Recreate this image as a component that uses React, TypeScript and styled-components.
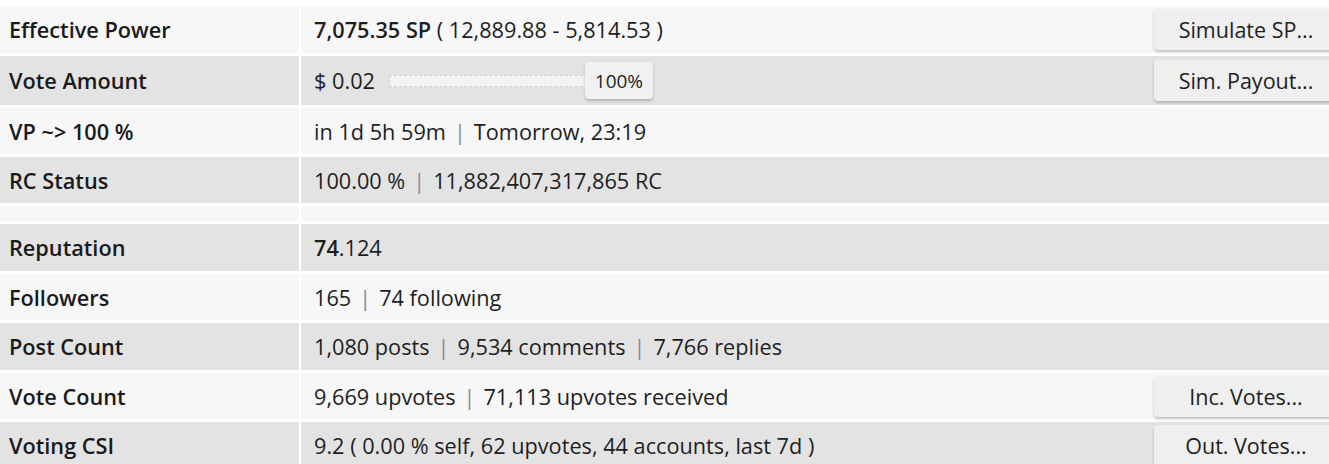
import React from "react";
import styled, { createGlobalStyle } from "styled-components";

const Global = createGlobalStyle`
  html, body { margin: 0; padding: 0; background: #ffffff; overflow: hidden; }
  body { font-family: "Open Sans", "Noto Sans", sans-serif; color: #222; }
`;

const Table = styled.div`
  width: 1338px;
  padding-top: 6px;
  display: flex;
  flex-direction: column;
  gap: 3px;
  background: #fff;
`;

const Row = styled.div<{ $h: number }>`
  display: grid;
  grid-template-columns: 299px 1fr;
  column-gap: 2px;
  height: ${(p) => p.$h}px;
`;

const Label = styled.div<{ $dark?: boolean }>`
  background: ${(p) => (p.$dark ? "#e3e3e3" : "#f7f7f7")};
  display: flex;
  align-items: center;
  padding-left: 9px;
  font-size: 21.7px;
  font-weight: 600;
  color: #1a1a1a;
`;

const Value = styled.div<{ $dark?: boolean }>`
  background: ${(p) => (p.$dark ? "#e3e3e3" : "#f7f7f7")};
  display: flex;
  align-items: center;
  padding-left: 13px;
  font-size: 21.7px;
  font-weight: 400;
  color: #1e1e1e;
  white-space: pre;
`;

const Strong = styled.b`
  font-weight: 600;
`;

const Sep = styled.span`
  color: #8a8a90;
  margin: 0 8px;
`;

const ActionButton = styled.button`
  margin-left: auto;
  width: 184px;
  height: 41px;
  border: none;
  border-radius: 4px;
  background: #efefef;
  box-shadow: 0 2px 3px rgba(0, 0, 0, 0.22);
  font-family: "Open Sans", "Noto Sans", sans-serif;
  font-size: 21.5px;
  color: #1e1e1e;
  padding: 0;
  cursor: pointer;
`;

const Slider = styled.div`
  position: relative;
  margin-left: 14px;
  width: 264px;
  height: 37px;
  display: flex;
  align-items: center;
`;

const Track = styled.div`
  width: 100%;
  height: 10px;
  border: 1px dashed #cfcfcf;
  background: #f3f3f3;
`;

const Handle = styled.div`
  position: absolute;
  right: 0;
  top: 0;
  width: 68px;
  height: 37px;
  border-radius: 4px;
  background: #f1f1f1;
  box-shadow: 0 2px 3px rgba(0, 0, 0, 0.22);
  display: flex;
  align-items: center;
  justify-content: center;
  font-size: 19px;
  color: #1e1e1e;
`;

type Item = {
  label: React.ReactNode;
  value?: React.ReactNode;
  h: number;
  dark?: boolean;
  button?: string;
};

const rows: Item[] = [
  {
    label: "Effective Power",
    value: (
      <>
        <Strong>7,075.35 SP</Strong>
        {" ( 12,889.88 - 5,814.53 )"}
      </>
    ),
    h: 47,
    button: "Simulate SP...",
  },
  {
    label: "Vote Amount",
    value: (
      <>
        {"$ 0.02"}
        <Slider>
          <Track />
          <Handle>100%</Handle>
        </Slider>
      </>
    ),
    h: 49,
    dark: true,
    button: "Sim. Payout...",
  },
  {
    label: "VP ~> 100 %",
    value: (
      <>
        {"in 1d 5h 59m"}
        <Sep>|</Sep>
        {"Tomorrow, 23:19"}
      </>
    ),
    h: 46,
  },
  {
    label: "RC Status",
    value: (
      <>
        {"100.00 %"}
        <Sep>|</Sep>
        {"11,882,407,317,865 RC"}
      </>
    ),
    h: 46,
    dark: true,
  },
  { label: "", value: "", h: 15 },
  {
    label: "Reputation",
    value: (
      <>
        <Strong>74</Strong>
        {".124"}
      </>
    ),
    h: 47,
    dark: true,
  },
  {
    label: "Followers",
    value: (
      <>
        {"165"}
        <Sep>|</Sep>
        {"74 following"}
      </>
    ),
    h: 46,
  },
  {
    label: "Post Count",
    value: (
      <>
        {"1,080 posts"}
        <Sep>|</Sep>
        {"9,534 comments"}
        <Sep>|</Sep>
        {"7,766 replies"}
      </>
    ),
    h: 47,
    dark: true,
  },
  {
    label: "Vote Count",
    value: (
      <>
        {"9,669 upvotes"}
        <Sep>|</Sep>
        {"71,113 upvotes received"}
      </>
    ),
    h: 46,
    button: "Inc. Votes...",
  },
  {
    label: "Voting CSI",
    value: "9.2 ( 0.00 % self, 62 upvotes, 44 accounts, last 7d )",
    h: 46,
    dark: true,
    button: "Out. Votes...",
  },
];

export default function App() {
  return (
    <>
      <Global />
      <Table>
        {rows.map((r, i) => (
          <Row key={i} $h={r.h}>
            <Label $dark={r.dark}>{r.label}</Label>
            <Value $dark={r.dark}>
              {r.value}
              {r.button && <ActionButton>{r.button}</ActionButton>}
            </Value>
          </Row>
        ))}
      </Table>
    </>
  );
}
